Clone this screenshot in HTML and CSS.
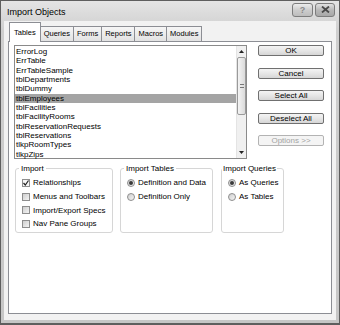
FILE: index.html
```html
<!DOCTYPE html>
<html lang="en">
<head>
    <meta charset="UTF-8">
    <title>Import Objects</title>
    <link rel="stylesheet" href="styles.css">
</head>
<body>
    <div class="window">
        <div class="titlebar">
            <span class="title">Import Objects</span>
            <div class="caption-buttons">
                <span class="cap-btn help">?</span>
                <span class="cap-btn close">
                    <svg width="9" height="7" viewBox="0 0 9 7"><path d="M1 0.5 L8 6.5 M8 0.5 L1 6.5" stroke="#4a4a4a" stroke-width="1.8"/></svg>
                </span>
            </div>
        </div>

        <div class="client">
            <div class="tabs">
                <span class="tab active">Tables</span>
                <span class="tab">Queries</span>
                <span class="tab">Forms</span>
                <span class="tab">Reports</span>
                <span class="tab">Macros</span>
                <span class="tab">Modules</span>
            </div>

            <div class="panel">
                <div class="top">
                    <div class="list">
                        <ul class="items">
                            <li>ErrorLog</li>
                            <li>ErrTable</li>
                            <li>ErrTableSample</li>
                            <li>tblDepartments</li>
                            <li>tblDummy</li>
                            <li class="selected">tblEmployees</li>
                            <li>tblFacilities</li>
                            <li>tblFacilityRooms</li>
                            <li>tblReservationRequests</li>
                            <li>tblReservations</li>
                            <li>tlkpRoomTypes</li>
                            <li>tlkpZips</li>
                        </ul>
                        <div class="scrollbar">
                            <div class="arrow">
                                <svg width="5" height="3" viewBox="0 0 5 3"><path d="M0 3 L2.5 0 L5 3 Z" fill="#222"/></svg>
                            </div>
                            <div class="thumb"><span class="grip"></span></div>
                            <div class="track"></div>
                            <div class="arrow">
                                <svg width="5" height="3" viewBox="0 0 5 3"><path d="M0 0 L2.5 3 L5 0 Z" fill="#222"/></svg>
                            </div>
                        </div>
                    </div>

                    <div class="actions">
                        <button>OK</button>
                        <button>Cancel</button>
                        <button>Select All</button>
                        <button>Deselect All</button>
                        <button class="disabled">Options &gt;&gt;</button>
                    </div>
                </div>

                <div class="groups">
                    <fieldset class="group g-import">
                        <legend>Import</legend>
                        <div class="opt"><span class="check checked">
                            <svg width="6" height="6" viewBox="0 0 6 6"><path d="M0.5 3 L2.3 5 L5.5 0.5" stroke="#222" stroke-width="1.2" fill="none"/></svg>
                        </span>Relationships</div>
                        <div class="opt"><span class="check"></span>Menus and Toolbars</div>
                        <div class="opt"><span class="check"></span>Import/Export Specs</div>
                        <div class="opt"><span class="check"></span>Nav Pane Groups</div>
                    </fieldset>

                    <fieldset class="group g-tables">
                        <legend>Import Tables</legend>
                        <div class="opt"><span class="radio on"></span>Definition and Data</div>
                        <div class="opt"><span class="radio"></span>Definition Only</div>
                    </fieldset>

                    <fieldset class="group g-queries">
                        <legend>Import Queries</legend>
                        <div class="opt"><span class="radio on"></span>As Queries</div>
                        <div class="opt"><span class="radio"></span>As Tables</div>
                    </fieldset>
                </div>
            </div>
        </div>
    </div>
</body>
</html>
```

FILE: styles.css
```css
body {
    margin: 0;
    font-family: 'Liberation Sans', Arial, sans-serif;
    font-size: 8px;
    color: #000;
    background: #fff;
}
.window {
    width: 340px;
    height: 325px;
    box-sizing: border-box;
    border: 1px solid #5e5e5e;
    border-bottom-width: 2px;
    padding: 0 3px 3px 3px;
    background: linear-gradient(#e4e4e4, #cfcfcf 30px, #c6c6c6);
    display: flex;
    flex-direction: column;
}
.titlebar {
    height: 20px;
    display: flex;
    align-items: center;
    padding-left: 3px;
}
.title {
    font-size: 9px;
    flex: 1;
    margin-top: 2px;
}
.caption-buttons {
    display: flex;
    gap: 2px;
    margin-right: 1px;
    margin-top: -3px;
}
.cap-btn {
    height: 12px;
    border: 1px solid #7d7d7d;
    border-radius: 3px;
    background: linear-gradient(#ececec, #cdcdcd 50%, #bdbdbd);
    display: flex;
    align-items: center;
    justify-content: center;
    color: #8a8a8a;
    font-size: 9px;
    font-weight: bold;
}
.help {
    width: 19px;
}
.close {
    width: 18px;
    background: linear-gradient(#e2e2e2, #b8b8b8 50%, #a8a8a8);
}
.client {
    flex: 1;
    background: #f2f2f2;
    padding: 2px 4px 6px 4px;
    display: flex;
    flex-direction: column;
}
.tabs {
    display: flex;
    align-items: flex-end;
    height: 18px;
    padding-left: 2px;
    position: relative;
    z-index: 1;
}
.tab {
    height: 14px;
    line-height: 14px;
    padding: 0 3px;
    font-size: 7.5px;
    border: 1px solid #8c8e94;
    border-bottom: none;
    margin-right: -1px;
    background: linear-gradient(#f6f6f6, #e2e2e2);
}
.tab.active {
    height: 19px;
    line-height: 19px;
    padding: 0 4px;
    background: #fff;
    margin-bottom: -1px;
    margin-left: -1px;
}
.panel {
    flex: 1;
    background: #fff;
    border: 1px solid #8c8e94;
    padding: 3px 5px 0 5px;
}
.top {
    display: flex;
}
.list {
    width: 233px;
    height: 114px;
    box-sizing: border-box;
    border: 1px solid #8a8a8a;
    display: flex;
}
.items {
    flex: 1;
    list-style: none;
    margin: 0;
    padding: 1px 0 0 0;
}
.items li {
    height: 9.33px;
    line-height: 9.33px;
    padding-left: 1px;
    white-space: nowrap;
}
.items li.selected {
    background: #a4a4a4;
}
.scrollbar {
    width: 9px;
    display: flex;
    flex-direction: column;
    background: #f0f0f0;
    border-left: 1px solid #e4e4e4;
}
.arrow {
    height: 11px;
    display: flex;
    align-items: center;
    justify-content: center;
}
.thumb {
    height: 58px;
    box-sizing: border-box;
    border: 1px solid #9a9a9a;
    border-radius: 2px;
    background: linear-gradient(90deg, #f4f4f4, #dadada);
    display: flex;
    align-items: center;
    justify-content: center;
}
.grip {
    width: 4px;
    height: 4px;
    border-top: 1px solid #777;
    border-bottom: 1px solid #777;
    box-sizing: border-box;
}
.track {
    flex: 1;
}
.actions {
    margin-left: 11px;
    width: 66px;
    display: flex;
    flex-direction: column;
    gap: 11.5px;
}
.actions button {
    height: 11px;
    padding: 0;
    font-family: inherit;
    font-size: 8px;
    line-height: 9px;
    color: #000;
    border: 1px solid #707070;
    border-radius: 2px;
    background: linear-gradient(#f4f4f4, #e6e6e6 50%, #d6d6d6);
}
.actions button.disabled {
    color: #a3a3a3;
    border-color: #b3b3b3;
    background: #f4f4f4;
}
.groups {
    display: flex;
    margin: 5px 0 0 1px;
    gap: 7px;
}
.group {
    margin: 0;
    min-width: 0;
    box-sizing: border-box;
    border: 1px solid #d6d6d6;
    border-radius: 3px;
    padding: 3px 4px 1px 6px;
}
.group legend {
    padding: 0 2px;
    margin-left: -3px;
    line-height: 9px;
    white-space: nowrap;
}
.g-import {
    width: 98px;
}
.g-tables {
    width: 93px;
}
.g-queries {
    width: 63px;
    margin-left: 1px;
    padding-right: 0;
}
.g-queries legend {
    margin-left: -6px;
    padding: 0 1px;
}
.opt {
    height: 13.7px;
    display: flex;
    align-items: center;
    white-space: nowrap;
}
.check {
    width: 8px;
    height: 8px;
    box-sizing: border-box;
    border: 1px solid #8e8e8e;
    background: linear-gradient(135deg, #cfcfcf, #f4f4f4);
    margin-right: 3px;
    display: flex;
    align-items: center;
    justify-content: center;
}
.check.checked {
    background: #f6f6f6;
}
.radio {
    width: 8px;
    height: 8px;
    box-sizing: border-box;
    border: 1px solid #8e8e8e;
    border-radius: 50%;
    background: linear-gradient(135deg, #cfcfcf, #f4f4f4);
    margin-right: 3px;
    display: flex;
    align-items: center;
    justify-content: center;
}
.radio.on::after {
    content: "";
    width: 4px;
    height: 4px;
    border-radius: 50%;
    background: #3a3a3a;
}
```
